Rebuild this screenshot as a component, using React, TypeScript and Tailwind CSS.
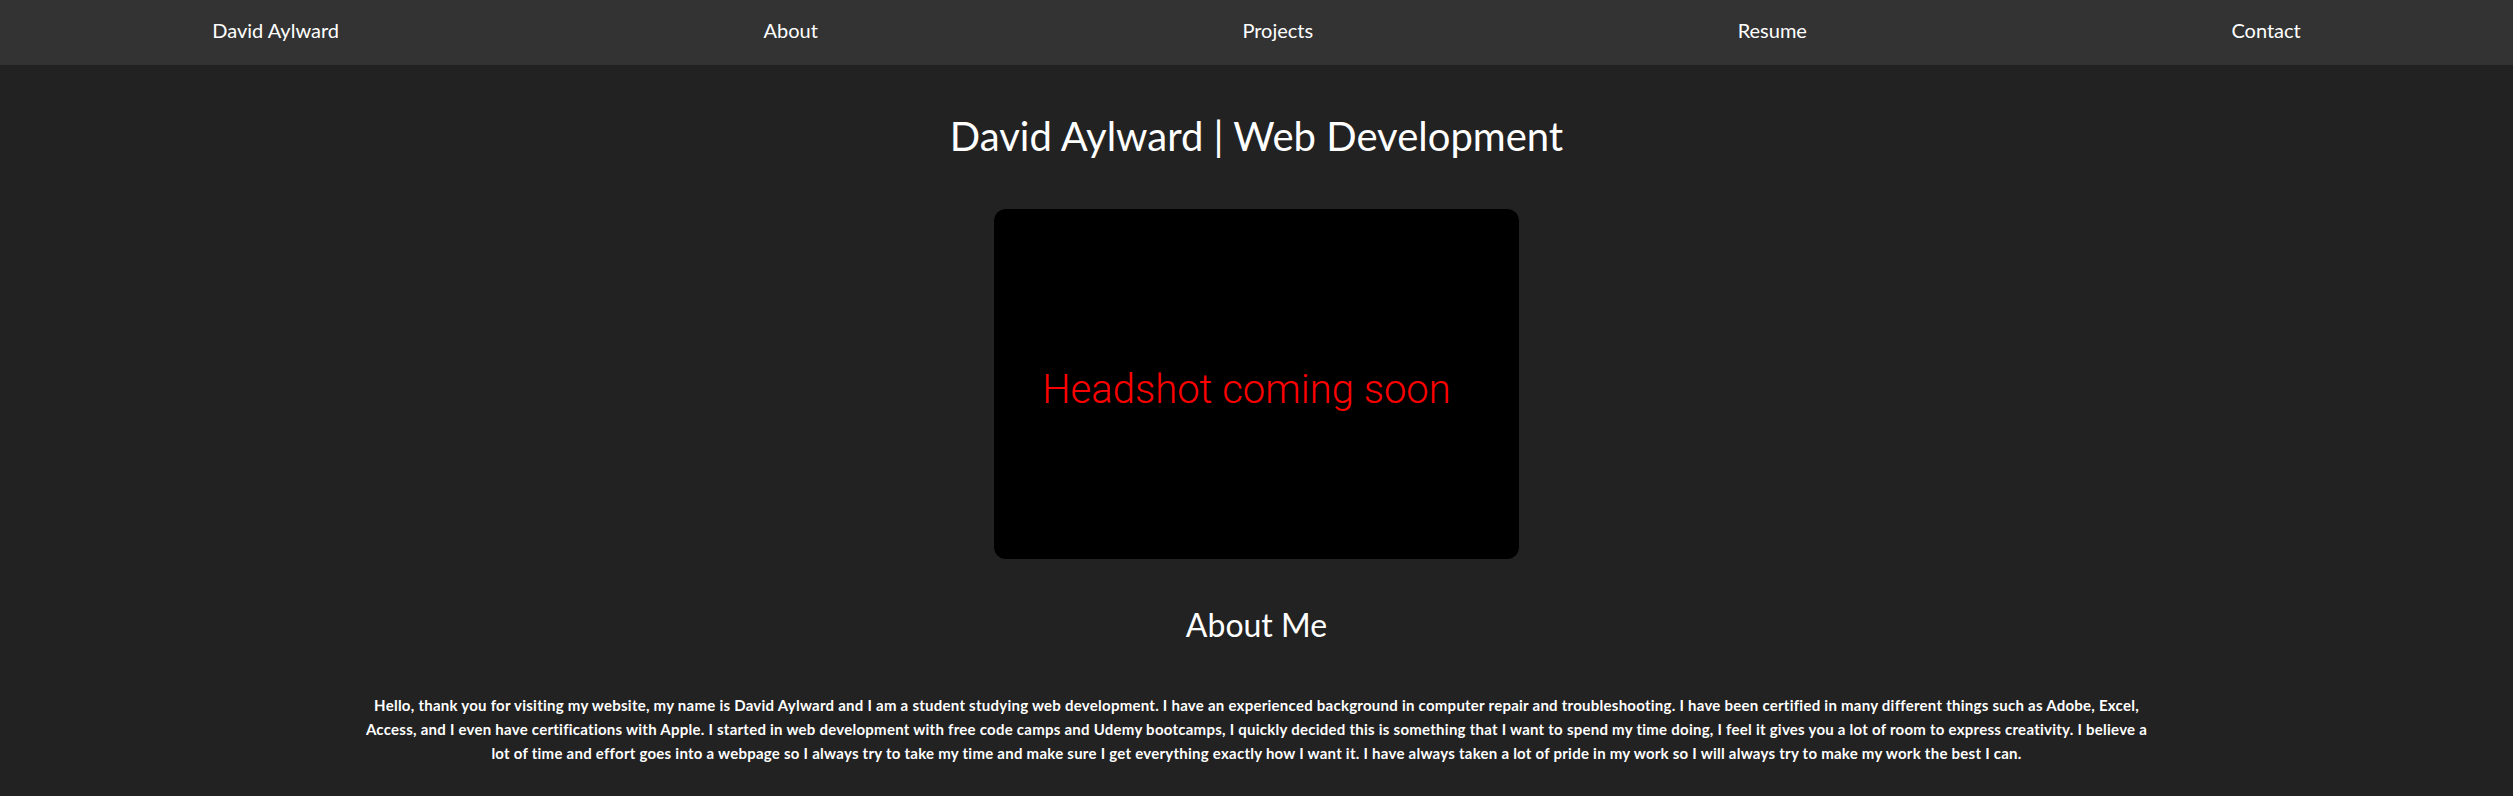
const navLinks = ['David Aylward', 'About', 'Projects', 'Resume', 'Contact']

export default function App() {
  return (
    <div className="min-h-screen bg-[#222222] text-white font-['Lato','Liberation_Sans',sans-serif]">
      {/* Nav */}
      <nav className="flex h-[65px] items-center justify-around bg-[#333333] pb-[5px]">
        {navLinks.map((link) => (
          <a key={link} href="#" className="text-[20px] leading-none text-white">
            {link}
          </a>
        ))}
      </nav>

      <main className="flex flex-col items-center">
        <h1 className="mt-[47px] text-[40px] leading-[48px]">David Aylward | Web Development</h1>

        {/* Headshot placeholder */}
        <div className="mt-[49px] flex h-[350px] w-[525px] items-center justify-center rounded-xl bg-black">
          <span className="pr-[20px] pt-[12px] text-[40px] font-light text-[#f00] font-['Roboto','Noto_Sans',sans-serif]">
            Headshot coming soon
          </span>
        </div>

        <h2 className="mt-[47px] text-[32px] leading-[38px]">About Me</h2>

        <p className="mt-[49px] w-[1785px] text-center text-[15px] font-bold leading-[24px] tracking-[0.25px]">
          Hello, thank you for visiting my website, my name is David Aylward and I am a student studying web
          development. I have an experienced background in computer repair and troubleshooting. I have been
          certified in many different things such as Adobe, Excel, Access, and I even have certifications with
          Apple. I started in web development with free code camps and Udemy bootcamps, I quickly decided this is
          something that I want to spend my time doing, I feel it gives you a lot of room to express creativity. I
          believe a lot of time and effort goes into a webpage so I always try to take my time and make sure I get
          everything exactly how I want it. I have always taken a lot of pride in my work so I will always try to
          make my work the best I can.
        </p>
      </main>
    </div>
  )
}
